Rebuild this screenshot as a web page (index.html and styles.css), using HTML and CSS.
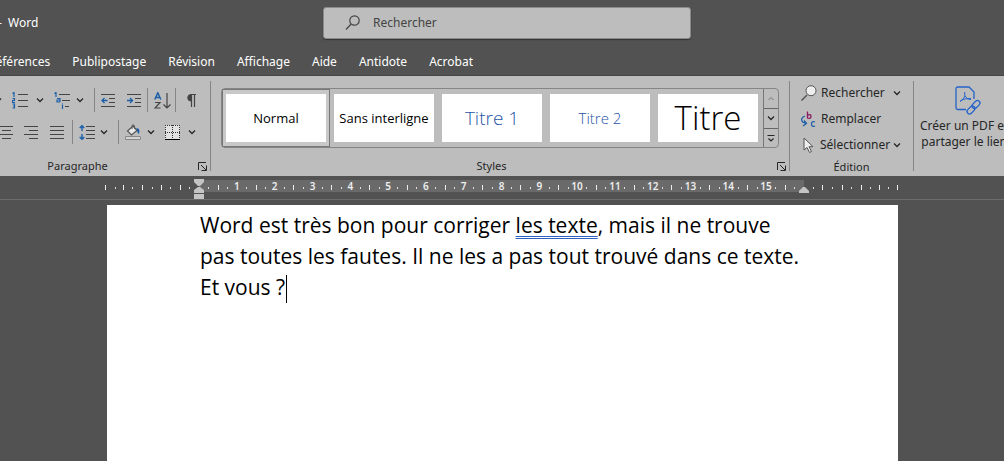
FILE: index.html
```html
<!DOCTYPE html>
<html lang="fr">
<head>
<meta charset="utf-8">
<title>Word</title>
<link rel="stylesheet" href="styles.css">
</head>
<body>
<svg class="defs" width="0" height="0" aria-hidden="true">
  <symbol id="chev" viewBox="0 0 8 8"><path d="M1 2.500l3 3 3-3" fill="none" stroke="#262626" stroke-width="1.300"/></symbol>
  <symbol id="launcher" viewBox="0 0 9 9"><path d="M.5 8V.5H8M3 3l5 5M8.500 3.500v5h-5" fill="none" stroke="#262626"/></symbol>
</svg>
<header class="titlebar">
  <span class="title">-&nbsp; Word</span>
  <label class="search">
    <svg width="16" height="16" viewBox="0 0 16 16"><g fill="none" stroke="#444" stroke-width="1.200"><circle cx="9.500" cy="5.500" r="4.700"/><path d="M6.200 9L1 14.500"/></g></svg>
    <input type="text" placeholder="Rechercher" aria-label="Rechercher">
  </label>
</header>
<nav class="tabs">
  <button>Références</button><button>Publipostage</button><button>Révision</button><button>Affichage</button><button>Aide</button><button>Antidote</button><button>Acrobat</button>
</nav>
<section class="ribbon">
  <div class="group paragraph">
    <div class="tools">
      <button aria-label="Options des puces"><svg width="8" height="8"><use href="#chev"/></svg></button>
      <button aria-label="Numérotation" class="m-wide"><svg width="16" height="17" viewBox="0 0 16 17"><path d="M6 2.500h10M6 8.500h10M6 14.500h10" stroke="#444"/><path d="M.5 1.500L2 .5V5M.5 6.500h2v2h-2v2H3M.5 12h2v4h-2M1 14h1.500" fill="none" stroke="#1c5fa8" stroke-width="1.200"/></svg></button>
      <button aria-label="Options de numérotation" class="m-mid"><svg width="8" height="8"><use href="#chev"/></svg></button>
      <button aria-label="Liste à plusieurs niveaux" class="m-wide"><svg width="16" height="17" viewBox="0 0 16 17"><path d="M5 2.500h11M8 8.500h8M11 14.500h4" stroke="#444"/><path d="M.5 1.500L2 .5V5M3 6.500h3V10M6 8H3v2h3M8.500 11.500v1M8.500 13v4" fill="none" stroke="#1c5fa8" stroke-width="1.200"/></svg></button>
      <button aria-label="Options de liste" class="m-small"><svg width="8" height="8"><use href="#chev"/></svg></button>
      <i class="sep m-wide"></i>
      <button aria-label="Diminuer le retrait" class="m-small"><svg width="16" height="17" viewBox="0 0 16 17"><path d="M0 2.500h14M8 6.500h6M8 10.500h6M0 14.500h14" stroke="#444"/><path d="M6.500 8.500H1M3.500 6L1 8.500 3.500 11" fill="none" stroke="#1c5fa8" stroke-width="1.300"/></svg></button>
      <button aria-label="Augmenter le retrait" class="m-wide"><svg width="16" height="17" viewBox="0 0 16 17"><path d="M0 2.500h14M8 6.500h6M8 10.500h6M0 14.500h14" stroke="#444"/><path d="M0 8.500h5.500M3 6l2.500 2.500L3 11" fill="none" stroke="#1c5fa8" stroke-width="1.300"/></svg></button>
      <i class="sep m-tiny"></i>
      <button aria-label="Trier" class="m-small"><svg width="17" height="17" viewBox="0 0 17 17"><path d="M.8 7.500L3.800.8l3 6.700M2 5.500h3.700" fill="none" stroke="#1c5fa8" stroke-width="1.500"/><path d="M1 10.500h5L1 16h5.500M13 1v15M9.500 12.500L13 16l3.500-3.500" fill="none" stroke="#444" stroke-width="1.200"/></svg></button>
      <i class="sep m-tiny"></i>
      <button aria-label="Afficher tout" class="m-wide"><svg width="10" height="15" viewBox="0 0 10 15"><path d="M5 1.500a3.200 3.200 0 0 0 0 6.500z" fill="#444" stroke="#444"/><path d="M5.500 14V1.500M8.500 14V1.500M4 1.500h6" fill="none" stroke="#444" stroke-width="1.200"/></svg></button>
    </div>
    <div class="tools second">
      <button aria-label="Centrer"><svg width="14" height="17" viewBox="0 0 14 17"><path d="M0 2.500h13M2 6.500h9M0 10.500h13M2 14.500h9" stroke="#444"/></svg></button>
      <button aria-label="Aligner à droite" class="m-wide"><svg width="14" height="17" viewBox="0 0 14 17"><path d="M0 2.500h14M5 6.500h9M0 10.500h14M5 14.500h9" stroke="#444"/></svg></button>
      <button aria-label="Justifier" class="m-big"><svg width="14" height="17" viewBox="0 0 14 17"><path d="M0 2.500h14M0 6.500h14M0 10.500h14M0 14.500h14" stroke="#444"/></svg></button>
      <i class="sep m-mid"></i>
      <button aria-label="Interligne" class="m-small"><svg width="17" height="17" viewBox="0 0 17 17"><path d="M7 2.500h9M7 6.500h9M7 10.500h9M7 14.500h9" stroke="#444"/><path d="M3 7V2M.7 4L3 1.700 5.300 4M3 10v5M.7 13L3 15.300 5.300 13" fill="none" stroke="#1c5fa8" stroke-width="1.400"/></svg></button>
      <button aria-label="Options d’interligne" class="m-tiny"><svg width="8" height="8"><use href="#chev"/></svg></button>
      <i class="sep m-wide"></i>
      <button aria-label="Trame de fond" class="m-small"><svg width="16" height="17" viewBox="0 0 16 17"><path d="M2.500 7L8 2l4 4.500L6.500 11z" fill="#e8e8e8" stroke="#555" stroke-width="1.200"/><path d="M7 5V1.500Q8.500-.5 9.500 2v3" fill="none" stroke="#555"/><path d="M11.500 4q4 0 2.500 6-2-1-2.500-6z" fill="#1c5fa8"/><path d="M.5 12.500h15v3H.5z" fill="#d4d4d4" stroke="#888"/></svg></button>
      <button aria-label="Options de trame" class="m-small"><svg width="8" height="8"><use href="#chev"/></svg></button>
      <button aria-label="Bordures" class="m-wide"><svg width="15" height="17" viewBox="0 0 15 17"><path d="M0 1h15v14H0z" fill="#e2e2e2"/><g stroke="#333" stroke-dasharray="1 1" shape-rendering="crispEdges"><path d="M0 1.500h15"/><path d="M0 8.500h15"/><path d="M.5 1v14"/><path d="M7.500 1v14"/><path d="M14.500 1v14"/></g><path d="M0 15.500h15" stroke="#000"/></svg></button>
      <button aria-label="Options de bordures" class="m-mid"><svg width="8" height="8"><use href="#chev"/></svg></button>
    </div>
    <footer><span>Paragraphe</span><button class="launch" aria-label="Paramètres de paragraphe"><svg width="9" height="9"><use href="#launcher"/></svg></button></footer>
  </div>
  <div class="group styles">
    <div class="gallery">
      <div class="cards">
        <button class="card active"><span>Normal</span></button>
        <button class="card"><span>Sans interligne</span></button>
        <button class="card h1"><span>Titre 1</span></button>
        <button class="card h2"><span>Titre 2</span></button>
        <button class="card big"><span>Titre</span></button>
      </div>
      <div class="scroll">
        <button aria-label="Monter"><svg width="8" height="8" viewBox="0 0 8 8"><path d="M1.500 5L4 2.500 6.500 5" fill="none" stroke="#777"/></svg></button>
        <button aria-label="Descendre"><svg width="8" height="8"><use href="#chev"/></svg></button>
        <button aria-label="Autres styles"><svg width="8" height="8" viewBox="0 0 8 8"><path d="M.5 1.500h7M1.500 4.500L4 7l2.500-2.500" fill="none" stroke="#262626" stroke-width="1.200"/></svg></button>
      </div>
    </div>
    <footer><span>Styles</span><button class="launch" aria-label="Volet Styles"><svg width="9" height="9"><use href="#launcher"/></svg></button></footer>
  </div>
  <div class="group edition">
    <div class="commands">
      <button><svg width="16" height="16" viewBox="0 0 16 16"><path d="M6 10L.5 15.500" stroke="#555" stroke-width="1.500"/><circle cx="10" cy="5.700" r="5" fill="#eee" stroke="#555"/></svg><span>Rechercher</span><svg class="m-tiny" width="8" height="8"><use href="#chev"/></svg></button>
      <button><svg width="16" height="16" viewBox="0 0 16 16"><path d="M6.500.5v7M6.500 4.500q3.500-2 3.500.8T6.500 7" fill="none" stroke="#8b1a62" stroke-width="1.300"/><path d="M4 5Q-1 7 1.500 11l3.500 1.500M3 9.500l2.500 3-3.500 2.500M14 11q-3.500-1.500-3.500 2t3.500 2" fill="none" stroke="#1c5fa8" stroke-width="1.300"/></svg><span>Remplacer</span></button>
      <button class="tight"><svg width="16" height="16" viewBox="0 0 16 16"><path d="M3 1v12l3-2.500 2.500 5 2-1L8 9.700h4z" fill="#eee" stroke="#555"/></svg><span>Sélectionner</span><svg width="8" height="8"><use href="#chev"/></svg></button>
    </div>
    <footer><span>Édition</span></footer>
  </div>
  <button class="pdf">
    <svg width="26" height="30" viewBox="0 0 26 30"><g fill="none" stroke="#2463c9" stroke-width="1.300"><path d="M11 23.500H3q-2 0-2-2V3q0-2 2-2h11l5 5v7"/><path d="M10 6q-1 0 0 4 2 4 6 3.500M10 10q-1.500 4-5 5.500 2-3 11-3" stroke-width="1"/><rect x="-2.500" y="-4.500" width="5" height="9" rx="2.500" transform="translate(21 18.500) rotate(45)"/><rect x="-2.500" y="-4.500" width="5" height="9" rx="2.500" transform="translate(16 24) rotate(45)"/></g></svg>
    <span>Créer un PDF et<br>partager le lien</span>
  </button>
</section>
<main class="workspace">
  <div class="ruler">
    <svg class="ticks" width="1004" height="23" viewBox="-0.5 0 1004 23">
      <path d="M198.500 4h605v12h-605z" fill="#6a6a6a"/>
      <path stroke="#eee" d="M105 9v5M123 9v5M142 9v5M161 9v5M180 9v5M218 9v5M256 9v5M293 9v5M331 9v5M369 9v5M407 9v5M445 9v5M482 9v5M520 9v5M558 9v5M596 9v5M634 9v5M671 9v5M709 9v5M747 9v5M785 9v5M822 9v5M842 9v5M861 9v5M879 9v5M897 9v5"/>
      <path stroke="#ddd" d="M115 11v2M132 11v2M152 11v2M170 11v2M189 11v2M208 11v2M227 11v2M246 11v2M265 11v2M284 11v2M303 11v2M322 11v2M341 11v2M360 11v2M379 11v2M397 11v2M416 11v2M435 11v2M454 11v2M473 11v2M492 11v2M511 11v2M530 11v2M549 11v2M568 11v2M586 11v2M605 11v2M624 11v2M643 11v2M662 11v2M681 11v2M700 11v2M719 11v2M738 11v2M757 11v2M775 11v2M794 11v2M813 11v2M832 11v2M851 11v2M870 11v2M888 11v2"/>
      <path fill="#c4c4c4" d="M193.500 3h10v3l-4 4h-2l-4-4zM193.500 17v-3l4-3h2l4 3v3zM193.500 18h10v5h-10zM798.500 17v-2l4-4h2l4 4v2z"/>
    </svg>
    <ol class="numbers"><li>1</li><li>2</li><li>3</li><li>4</li><li>5</li><li>6</li><li>7</li><li>8</li><li>9</li><li>10</li><li>11</li><li>12</li><li>13</li><li>14</li><li>15</li></ol>
  </div>
  <article class="page">
    <p>Word est très bon pour corriger <u>les texte</u>, mais il ne trouve<br>pas toutes les fautes. Il ne les a pas tout trouvé dans ce texte.<br>Et vous ?<span class="caret"></span></p>
  </article>
</main>
</body>
</html>
```
FILE: styles.css
```css
* { box-sizing: border-box; }
body { margin: 0; min-height: 100vh; display: flex; flex-direction: column; overflow: hidden; background: #525252; font: 12px/16px "Noto Sans", "Open Sans", sans-serif; color: #262626; }
button { border: 0; padding: 0; margin: 0; background: none; font: inherit; color: inherit; display: flex; align-items: center; flex: none; }
svg { display: block; flex: none; }
.defs { position: absolute; }
.titlebar { display: grid; grid-template-columns: 323px 368px 1fr; align-items: center; height: 46px; color: #fff; }
.title { margin-left: -2px; }
.search { display: flex; align-items: center; gap: 12px; height: 32px; padding-left: 21px; background: #bdbdbd; border: 1px solid #8a8a8a; border-radius: 3px; box-shadow: 0 1px 1px #333; }
.search input { flex: 1; min-width: 0; border: 0; padding: 0; outline: 0; background: none; font: inherit; }
.search input::placeholder { color: #444; opacity: 1; }
.tabs { display: flex; gap: 22px; height: 30px; padding-top: 2px; margin-left: -12px; color: #fff; border-bottom: 1px solid #464646; }
.ribbon { display: flex; height: 100px; background: #bdbdbd; }
.group { display: flex; flex-direction: column; flex: none; border-right: 1px solid #858585; margin-top: 5px; height: 90px; }
.group footer { display: flex; justify-content: center; align-items: center; position: relative; margin: auto 0 -4px; height: 18px; flex: none; font-size: 11px; }
.launch { position: absolute; right: 3px; }
.paragraph { width: 211px; }
.tools { display: flex; align-items: center; height: 24px; margin-top: 7px; margin-left: -6px; }
.tools.second { margin-top: 8px; margin-left: 0; }
.paragraph footer { padding-right: 55px; }
.m-tiny { margin-left: 4px; }
.m-small { margin-left: 6px; }
.m-mid { margin-left: 8px; }
.m-wide { margin-left: 10px; }
.m-big { margin-left: 12px; }
.sep { width: 1px; height: 24px; background: #858585; }
.styles { width: 579px; padding-left: 10px; }
.gallery { display: flex; width: 558px; height: 60px; margin-top: 7px; border: 1px solid #858585; border-radius: 4px; }
.cards { display: flex; flex: 1; }
.card { width: 108px; padding: 4px; font: 13px/16px "Open Sans", sans-serif; color: #000; }
.card span { display: flex; align-items: center; justify-content: center; width: 100px; height: 48px; background: #fff; white-space: nowrap; }
.card.active { border: 1px solid #777; padding: 3px; background: #c8c8c8; }
.card.h1 { font-size: 19px; font-weight: 300; color: #1f55a5; }
.card.h2 { font-size: 15px; font-weight: 300; color: #1f55a5; }
.card.big { font-size: 33px; font-weight: 300; }
.scroll { display: grid; grid-template-rows: repeat(3, 1fr); width: 15px; border-left: 1px solid #777; }
.scroll button { justify-content: center; }
.scroll button + button { border-top: 1px solid #666; }
.styles footer { padding-right: 27px; }
.edition { width: 124px; }
.commands { display: flex; flex-direction: column; padding-left: 11px; margin-top: -1px; }
.commands button { height: 26px; gap: 4px; }
.commands .tight { gap: 3px; }
.pdf { flex-direction: column; flex: none; padding: 10px 0 0 6px; gap: 2px; text-align: center; white-space: nowrap; }
.pdf svg { margin-left: 8px; }
.workspace { flex: 1; display: flex; flex-direction: column; }
.ruler { position: relative; height: 24px; border-bottom: 1px solid #6c6c6c; }
.ticks { position: absolute; left: 0; top: 0; }
.numbers { position: relative; display: grid; grid-template-columns: repeat(15, 1fr); width: 567px; margin: 4px 0 0 218px; padding: 0; list-style: none; text-align: center; font: 600 10px/13px "Noto Sans", sans-serif; color: #eee; }
.page { flex: 1; width: 791px; margin: 5px 0 0 107px; padding: 5px 93px; background: #fff; color: #000; }
.page p { margin: 0; font: 21px/31px "Open Sans", sans-serif; white-space: nowrap; }
.page u { text-decoration: underline double #2f5fc0 1px; text-underline-offset: 3px; }
.caret { display: inline-block; width: 1px; height: 28px; margin-left: 1px; background: #000; vertical-align: -8px; }
```
